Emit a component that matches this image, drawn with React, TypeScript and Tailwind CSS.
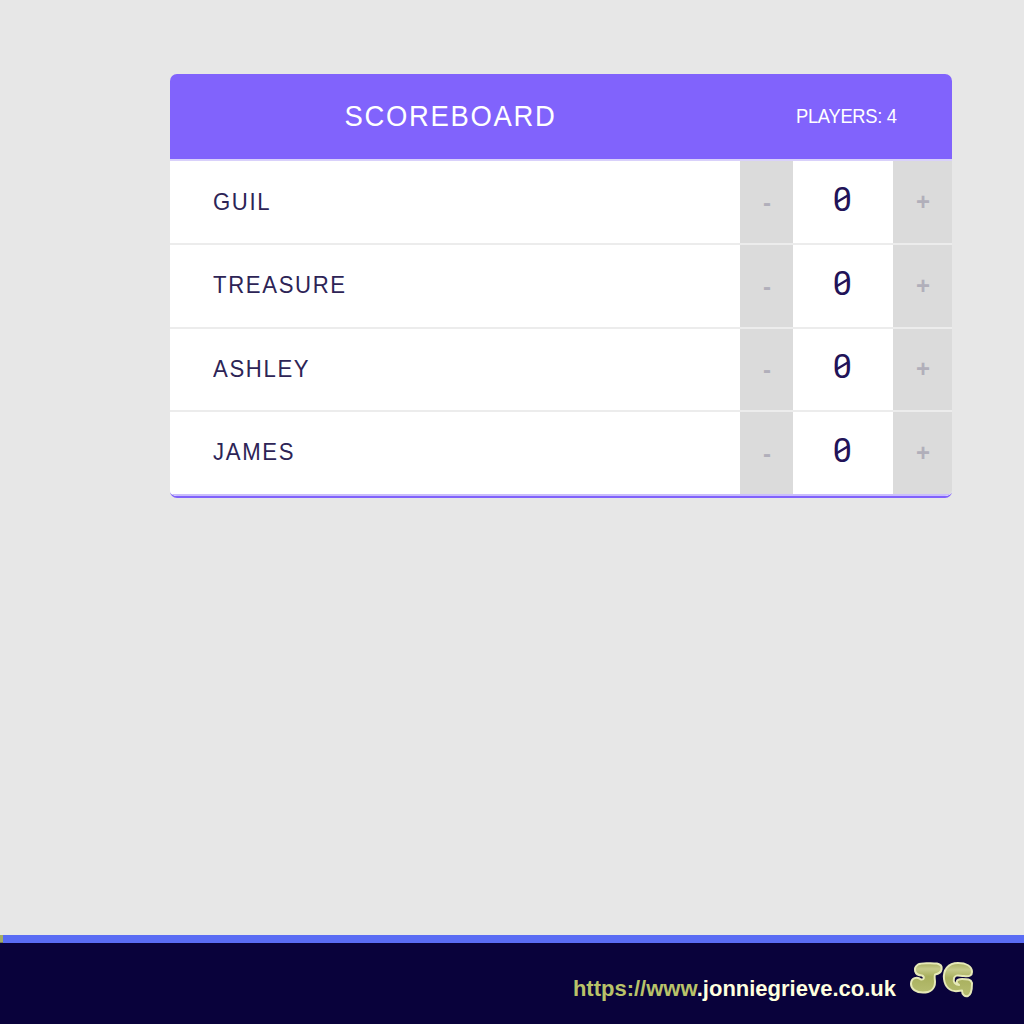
const players = ["GUIL", "TREASURE", "ASHLEY", "JAMES"];

function Score() {
  return (
    <div className="flex w-[100px] items-center justify-center bg-white">
      <span className="relative -left-px -top-[3px] block h-[36px] w-[20px] text-center font-[Roboto,sans-serif] text-[34px] leading-[36px] text-[#221358]">
        0
        <svg className="absolute inset-0" width="20" height="36" viewBox="0 0 20 36" fill="none">
          <path d="M3.8 21.8L16.2 14.2" stroke="#221358" strokeWidth="2.3" />
        </svg>
      </span>
    </div>
  );
}

function PlayerRow({ name }: { name: string }) {
  return (
    <div className="flex h-[83.6px] items-stretch border-b-[2.4px] border-[#ececec] bg-white text-[#2d2456] last:border-[#c9bdfc]">
      <div className="flex flex-1 items-center pb-px pl-[43px] text-[24px] tracking-[1.8px]">
        <span className="origin-left scale-x-[0.922]">{name}</span>
      </div>
      <button className="w-[53px] bg-[#dbdbdb] pt-[2px] text-[24px] font-bold text-[#b1afba]">-</button>
      <Score />
      <button className="w-[59px] bg-[#dbdbdb] text-[24px] font-bold text-[#b1afba]">+</button>
    </div>
  );
}

function Logo() {
  return (
    <svg className="ml-[9px] -mt-[5px]" width="72" height="44" viewBox="0 0 72 44">
      <defs>
        <linearGradient id="leaf" x1="0" y1="0" x2="0" y2="1">
          <stop offset="0" stopColor="#a8af62" />
          <stop offset="0.2" stopColor="#c5ca8a" />
          <stop offset="0.45" stopColor="#a9b05e" />
          <stop offset="1" stopColor="#b6bd70" />
        </linearGradient>
      </defs>
      <g fill="url(#leaf)" stroke="#e6e9b8" strokeWidth="2" strokeLinejoin="round">
        <path d="M13 5.5C17 3 24 4.5 32 4.5C39 6 38 14 30 15.5C29 18 30 20 30 23C30 30 25 33.5 18 33.5C11 33.5 6 30 6 25C6 19 12 17 16 20.5C19 21 20 18 17 16.5C9 16 8 9 13 5.5Z" />
        <path d="M67 13C67 7 61 4 53 4C43 4 38 11 39 20C40 28 45 33 53 32L57 31.5C57 36 60 38 63 37C66 36 67 31 67 24C66 20 62 20 57 20C51 20 50 24 54 26C50 26 48 23 49 19C51 15 54 17 59 17C65 18 67 16 67 13Z" />
      </g>
    </svg>
  );
}

export default function App() {
  return (
    <div className="flex h-screen flex-col overflow-hidden bg-[#e7e7e7] font-['Liberation_Sans',Arial,sans-serif]">
      <main className="flex-1 pl-[170.4px] pt-[74.4px]">
        <section className="w-[782px] overflow-hidden rounded-[7px] border-b-[2.6px] border-[#8062fb]">
          <header className="flex h-[87px] border-b-[2.4px] border-[#d9d1fb] bg-[#8163fc] text-white">
            <h1 className="w-[561px] scale-x-[0.93] pt-[25px] text-center text-[29.5px] leading-[33px] tracking-[1.8px]">SCOREBOARD</h1>
            <p className="ml-[65px] origin-left scale-x-[0.94] pt-[31px] text-[19.5px] leading-[22px] tracking-[-0.3px]">PLAYERS: 4</p>
          </header>
          {players.map((name) => (
            <PlayerRow key={name} name={name} />
          ))}
        </section>
      </main>
      <div className="flex h-[8px]">
        <div className="w-[3px] border-b border-[#777c54] bg-[#a4ad62]" />
        <div className="flex-1 bg-[#5a6cf4]" />
      </div>
      <footer className="flex h-[81px] items-center justify-end bg-[#09023b] pr-[47px]">
        <a className="mt-[9px] whitespace-nowrap text-[22px] font-bold text-[#ffffdf]">
          <span className="text-[#b9c269]">https://www</span>.jonniegrieve.co.uk
        </a>
        <Logo />
      </footer>
    </div>
  );
}
